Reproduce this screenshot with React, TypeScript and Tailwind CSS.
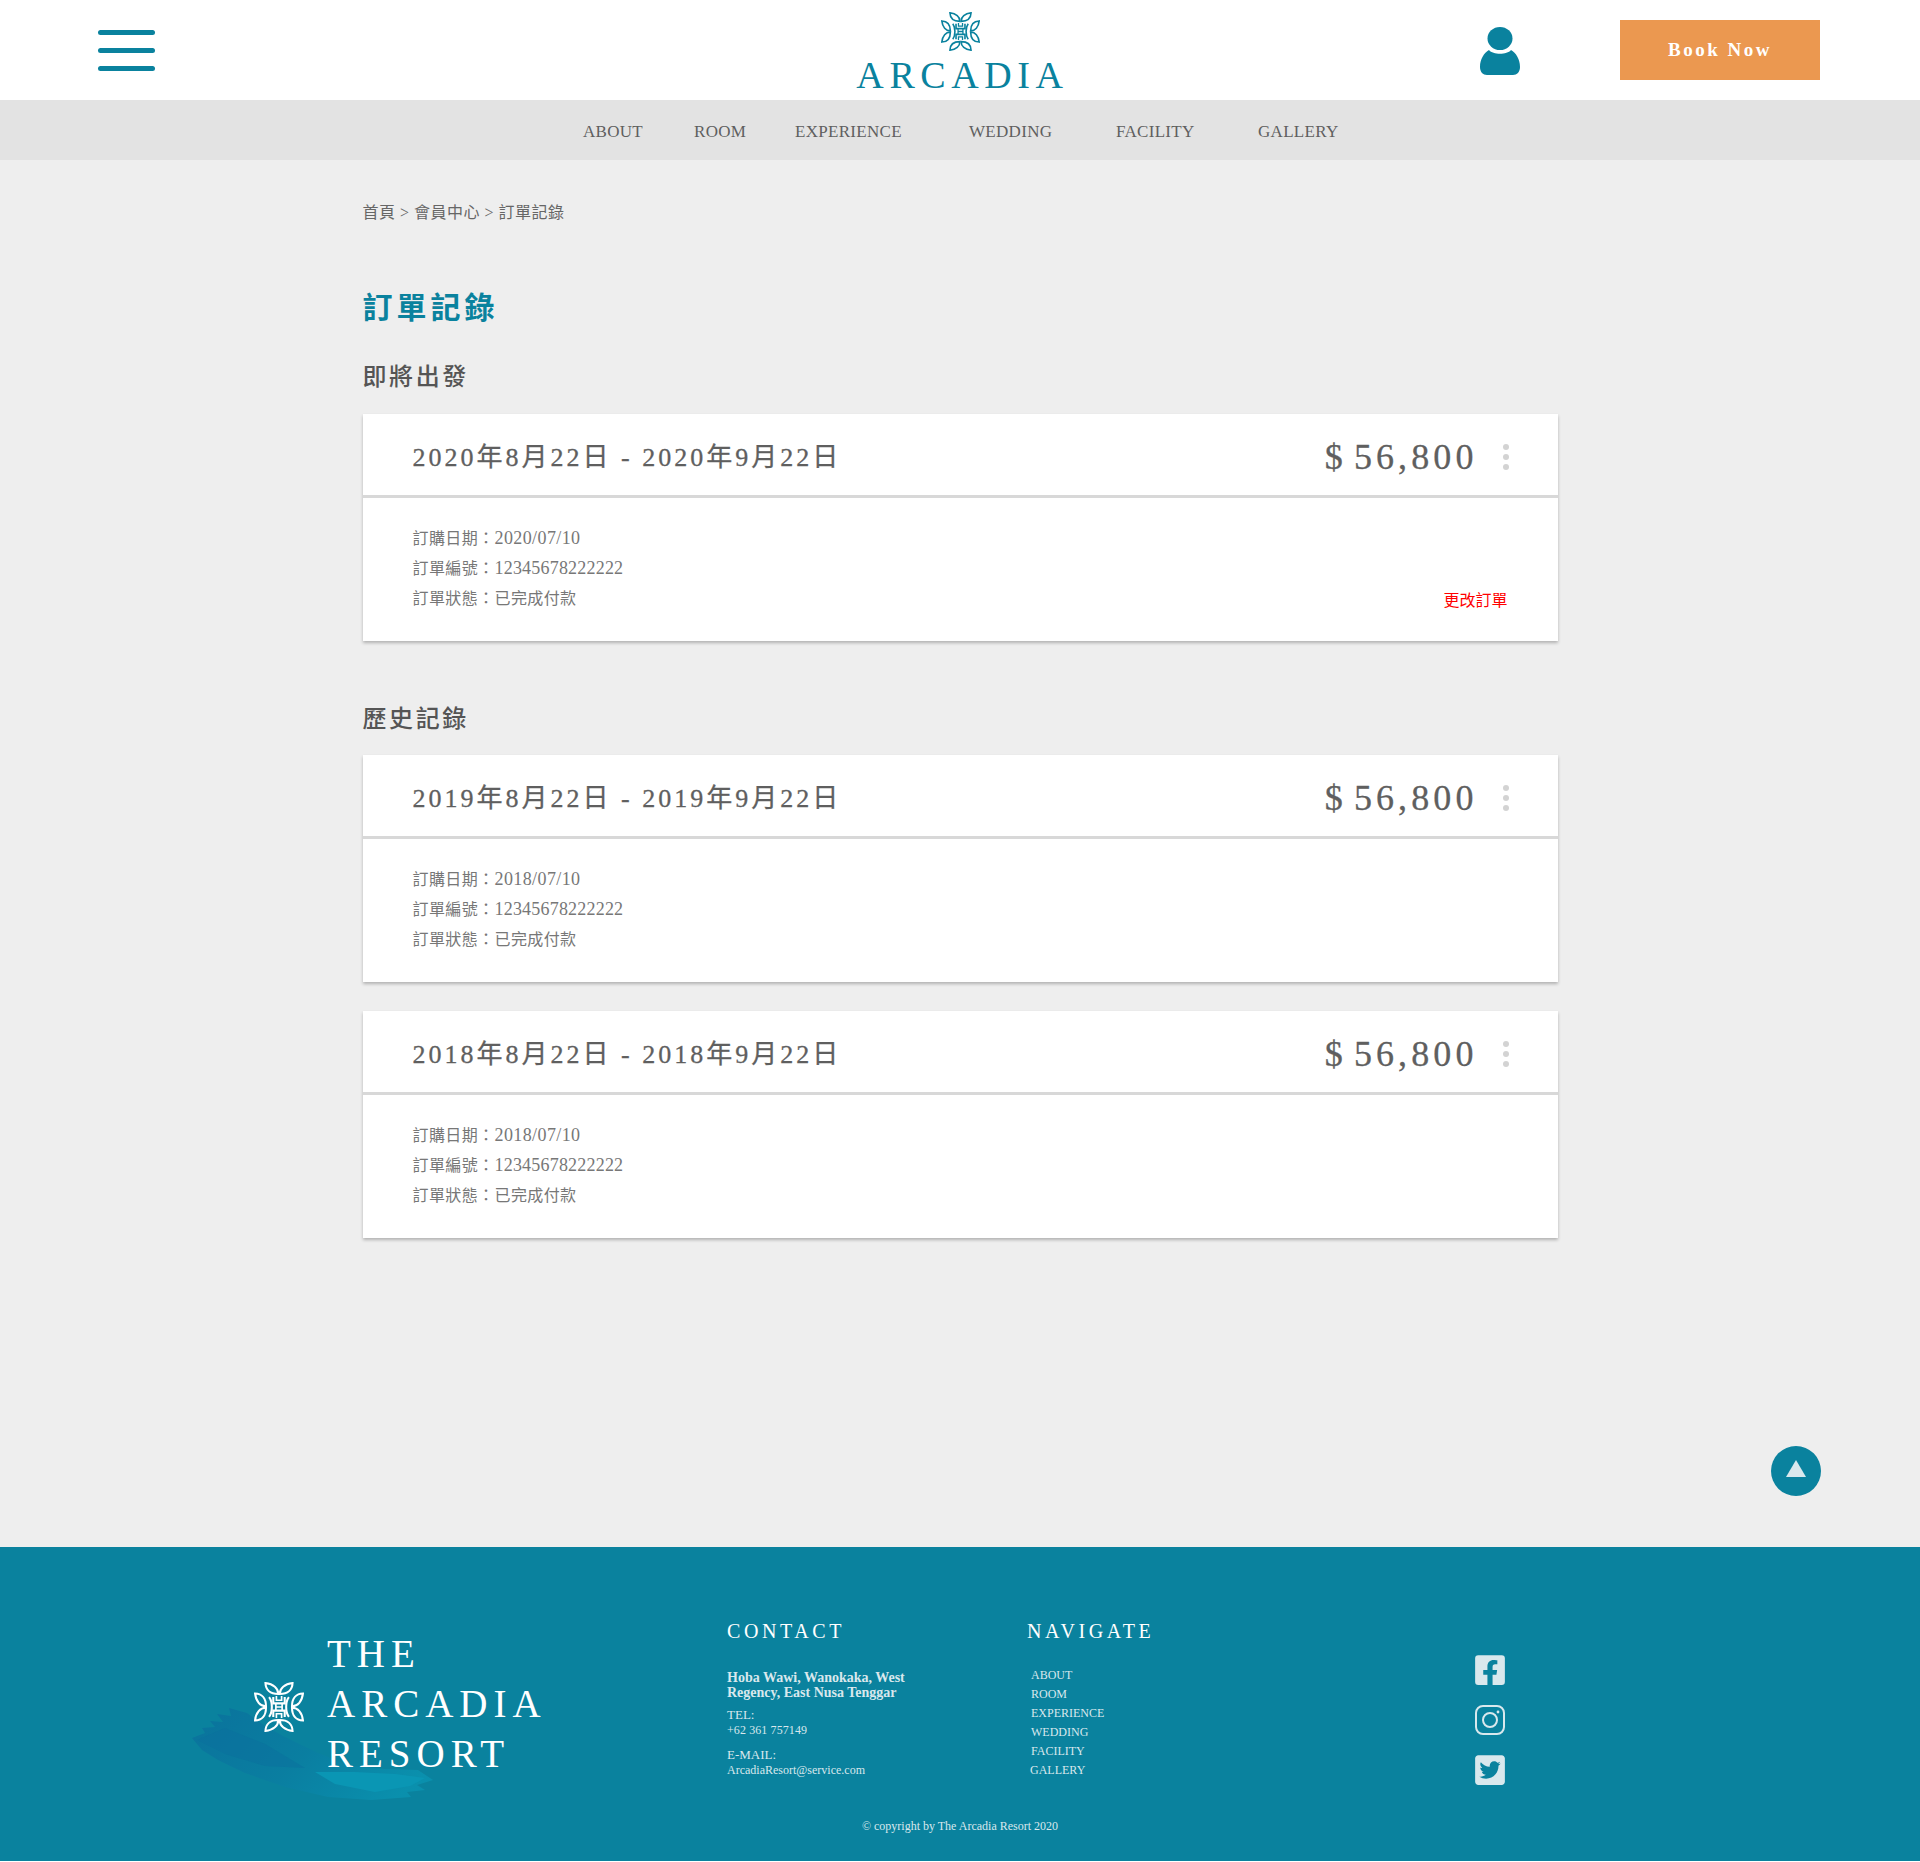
import React from "react";
import { FaFacebookSquare, FaTwitterSquare } from "react-icons/fa";

const navItems = [
  { label: "ABOUT", className: "w-[111px]" },
  { label: "ROOM", className: "w-[101px]" },
  { label: "EXPERIENCE", className: "w-[174px]" },
  { label: "WEDDING", className: "w-[147px]" },
  { label: "FACILITY", className: "w-[142px]" },
  { label: "GALLERY", className: "w-[80px]" },
];

const footerNav = ["ABOUT", "ROOM", "EXPERIENCE", "WEDDING", "FACILITY"];

const LEAVES = [0, 90, 180, 270];

const LogoMark = ({ className }: { className: string }) => (
  <svg viewBox="0 0 48 48" className={className} fill="none" stroke="currentColor" strokeWidth="2">
    {LEAVES.map((deg) => (
      <g key={deg} transform={`rotate(${deg} 24 24)`}>
        <path d="M23.2 11.5C23.4 6 18.5 1.8 11 1C11.2 7.5 15.5 11.5 23.2 11.5Z" />
        <path d="M24.8 11.5C24.6 6 29.5 1.8 37 1C36.8 7.5 32.5 11.5 24.8 11.5Z" />
      </g>
    ))}
    <path d="M14.5 14.5C18 19 18 29 14.5 33.5M33.5 14.5C30 19 30 29 33.5 33.5" />
    <path d="M18.5 14.5V20.5H29.5V14.5M18.5 33.5V27.5H29.5V33.5" />
    <path d="M21.5 13.5V17.5H26.5V13.5M21.5 34.5V30.5H26.5V34.5" strokeWidth="1.6" />
    <path d="M21 20.5V27.5M27 20.5V27.5M21 24H27" strokeWidth="1.6" />
  </svg>
);

const Brush = () => (
  <svg viewBox="0 0 250 110" className="absolute left-[185px] top-[153px] h-[110px] w-[250px]">
    <defs>
      <linearGradient id="brush" x1="0" y1="0.2" x2="1" y2="0.6">
        <stop offset="0" stopColor="#0a6c9c" />
        <stop offset="0.5" stopColor="#0a7ca2" />
        <stop offset="1" stopColor="#0a97b5" />
      </linearGradient>
    </defs>
    <path
      fill="url(#brush)"
      opacity="0.65"
      d="M7 38L20 33L17 28L30 27L25 21L38 22L32 14L46 16L44 8L62 13L80 26L100 37L133 53L166 66L200 69L233 70L248 80L232 85L240 90L222 92L226 97L186 100L143 97L100 87L60 73L33 60L17 50Z"
    />
    <path fill="#0a6f9d" opacity="0.5" d="M12 40L40 28L80 44L120 68L80 66L40 54Z" />
    <path fill="#0a96b4" d="M130 72L170 72L210 74L240 78L225 86L190 92L150 84Z" />
  </svg>
);

const OrderCard = ({
  range,
  orderDate,
  action,
}: {
  range: string;
  orderDate: string;
  action?: boolean;
}) => (
  <div className="bg-white shadow-[0_2px_3px_rgba(0,0,0,0.25)]">
    <div className="flex h-[84px] items-center justify-between border-b-[3px] border-[#d8d8d8] pl-[50px] pr-[49px] pt-[4px]">
      <span className="mt-[2px] text-[26px] tracking-[3px] text-[#5f5f5f] [-webkit-text-stroke:0.3px_#5f5f5f]">{range}</span>
      <div className="flex items-center">
        <span className="text-[36px] leading-none tracking-[4.1px] text-[#5f5f5f] [word-spacing:-6px] [-webkit-text-stroke:0.3px_#5f5f5f]">
          $ 56,800
        </span>
        <div className="ml-[25px] flex flex-col gap-[4px]">
          <span className="size-[6px] rounded-full bg-[#d3d3d3]" />
          <span className="size-[6px] rounded-full bg-[#d3d3d3]" />
          <span className="size-[6px] rounded-full bg-[#d3d3d3]" />
        </div>
      </div>
    </div>
    <div className="relative h-[143px] pl-[50px] pt-[26px] text-[16px] leading-[30px] tracking-[0.4px] text-[#777777]">
      <p className="h-[30px]">
        訂購日期：<span className="text-[18px] leading-none">{orderDate}</span>
      </p>
      <p className="h-[30px]">
        訂單編號：<span className="text-[18px] leading-none tracking-[0.2px]">12345678222222</span>
      </p>
      <p className="h-[30px]">訂單狀態：已完成付款</p>
      {action && <span className="absolute bottom-[28px] right-[50px] text-[16px] leading-[24px] tracking-[0px] text-[#ff0000]">更改訂單</span>}
    </div>
  </div>
);

const Copyright = () => (
  <p className="absolute inset-x-0 top-[271px] text-center text-[12px] leading-[16px]">
    © copyright by The Arcadia Resort 2020
  </p>
);

export default function App() {
  return (
    <div className="relative min-h-[1861px] bg-[#eeeeee] font-['Liberation_Serif','Noto_Sans_CJK_TC',serif]">
      <header className="flex h-[100px] items-center bg-white pl-[98px] pr-[100px]">
        <div className="flex w-[57px] flex-col gap-[13px]">
          <span className="h-[5px] rounded-full bg-[#0a829e]" />
          <span className="h-[5px] rounded-full bg-[#0a829e]" />
          <span className="h-[5px] rounded-full bg-[#0a829e]" />
        </div>
        <div className="mb-[6px] ml-[704px] flex w-[207px] flex-col items-center pt-[12px] text-[#0a829e]">
          <LogoMark className="mr-[5px] size-[39px]" />
          <span className="mt-[5px] whitespace-nowrap text-[38px] leading-[38px] tracking-[5.6px]">ARCADIA</span>
        </div>
        <svg viewBox="0 0 40 48" className="ml-[414px] mt-[2px] h-[48px] w-[40px] text-[#0a829e]" fill="currentColor">
          <ellipse cx="20" cy="11.5" rx="12.5" ry="11.5" />
          <path d="M9 23C13 28 27 28 31 23C36 26 40 32 40 40C40 45 37 48 33 48H7C3 48 0 45 0 40C0 32 4 26 9 23Z" />
        </svg>
        <button className="ml-[100px] h-[60px] w-[200px] bg-[#eb9850] text-[19px] font-bold tracking-[2.5px] text-white">
          Book Now
        </button>
      </header>

      <nav className="flex h-[60px] items-center bg-[#e3e3e3] pl-[583px] pt-[3px] text-[17px] tracking-[0.3px] text-[#5f5f5f]">
        {navItems.map((item) => (
          <span key={item.label} className={item.className}>
            {item.label}
          </span>
        ))}
      </nav>

      <main className="mx-auto h-[1387px] w-[1195px] pt-[41px]">
        <p className="text-[16px] leading-[24px] tracking-[0.5px] text-[#666666]">首頁 &gt; 會員中心 &gt; 訂單記錄</p>
        <h1 className="mt-[61px] text-[30px] font-bold leading-[44px] tracking-[4px] text-[#0a829e]">訂單記錄</h1>
        <h2 className="mt-[29px] text-[24px] font-medium leading-[36px] tracking-[2.6px] text-[#555555]">即將出發</h2>
        <div className="mt-[19px]">
          <OrderCard range="2020年8月22日 - 2020年9月22日" orderDate="2020/07/10" action />
        </div>
        <h2 className="mt-[60px] text-[24px] font-medium leading-[36px] tracking-[2.6px] text-[#555555]">歷史記錄</h2>
        <div className="mt-[18px] flex flex-col gap-[29px]">
          <OrderCard range="2019年8月22日 - 2019年9月22日" orderDate="2018/07/10" />
          <OrderCard range="2018年8月22日 - 2018年9月22日" orderDate="2018/07/10" />
        </div>
      </main>

      {/* back to top */}
      <button className="absolute left-[1771px] top-[1446px] flex size-[50px] items-center justify-center rounded-full bg-[#0a829e]">
        <span className="mb-[6px] h-0 w-0 border-x-[10px] border-b-[17px] border-x-transparent border-b-[#d9e8ed]" />
      </button>

      <footer className="relative flex h-[314px] bg-[#0a829e] text-[#d9e8ed]">
        <Brush />
        <div className="z-10 ml-[254px] mt-[135px] w-[73px]">
          <LogoMark className="size-[50px] text-white" />
        </div>
        <div className="z-10 mt-[82px] w-[400px] text-[39px] leading-[50px] tracking-[6px] text-white">
          <p>THE</p>
          <p>ARCADIA</p>
          <p>RESORT</p>
        </div>
        <div className="mt-[72px] w-[300px]">
          <h3 className="text-[20px] leading-[24px] tracking-[3.6px] text-white">CONTACT</h3>
          <p className="mt-[27px] w-[190px] text-[14px] font-bold leading-[15px]">Hoba Wawi, Wanokaka, West Regency, East Nusa Tenggar</p>
          <p className="mt-[7px] text-[13px] leading-[15px]">TEL:</p>
          <p className="mt-[1px] text-[12px] leading-[15px] tracking-[0.1px]">+62 361 757149</p>
          <p className="mt-[9px] text-[13px] leading-[15px]">E-MAIL:</p>
          <p className="mt-[1px] text-[12px] leading-[15px]">ArcadiaResort@service.com</p>
        </div>
        <div className="mt-[72px] w-[448px]">
          <h3 className="text-[20px] leading-[24px] tracking-[3.6px] text-white">NAVIGATE</h3>
          <ul className="mt-[23px] pl-[4px] text-[12px] leading-[19px]">
            {footerNav.map((item) => (
              <li key={item}>{item}</li>
            ))}
            <li className="-ml-[1px]">GALLERY</li>
          </ul>
        </div>
        <div className="mt-[106px] flex flex-col gap-[16px]">
          <FaFacebookSquare className="h-[34px] w-[30px]" />
          <svg viewBox="0 0 30 34" className="h-[34px] w-[30px]" fill="none" stroke="currentColor" strokeWidth="2">
            <rect x="1" y="3" width="28" height="28" rx="7" />
            <circle cx="15" cy="17" r="7" />
            <circle cx="23" cy="9" r="1.4" fill="currentColor" stroke="none" />
          </svg>
          <FaTwitterSquare className="h-[34px] w-[30px]" />
        </div>
        <Copyright />
      </footer>
    </div>
  );
}
